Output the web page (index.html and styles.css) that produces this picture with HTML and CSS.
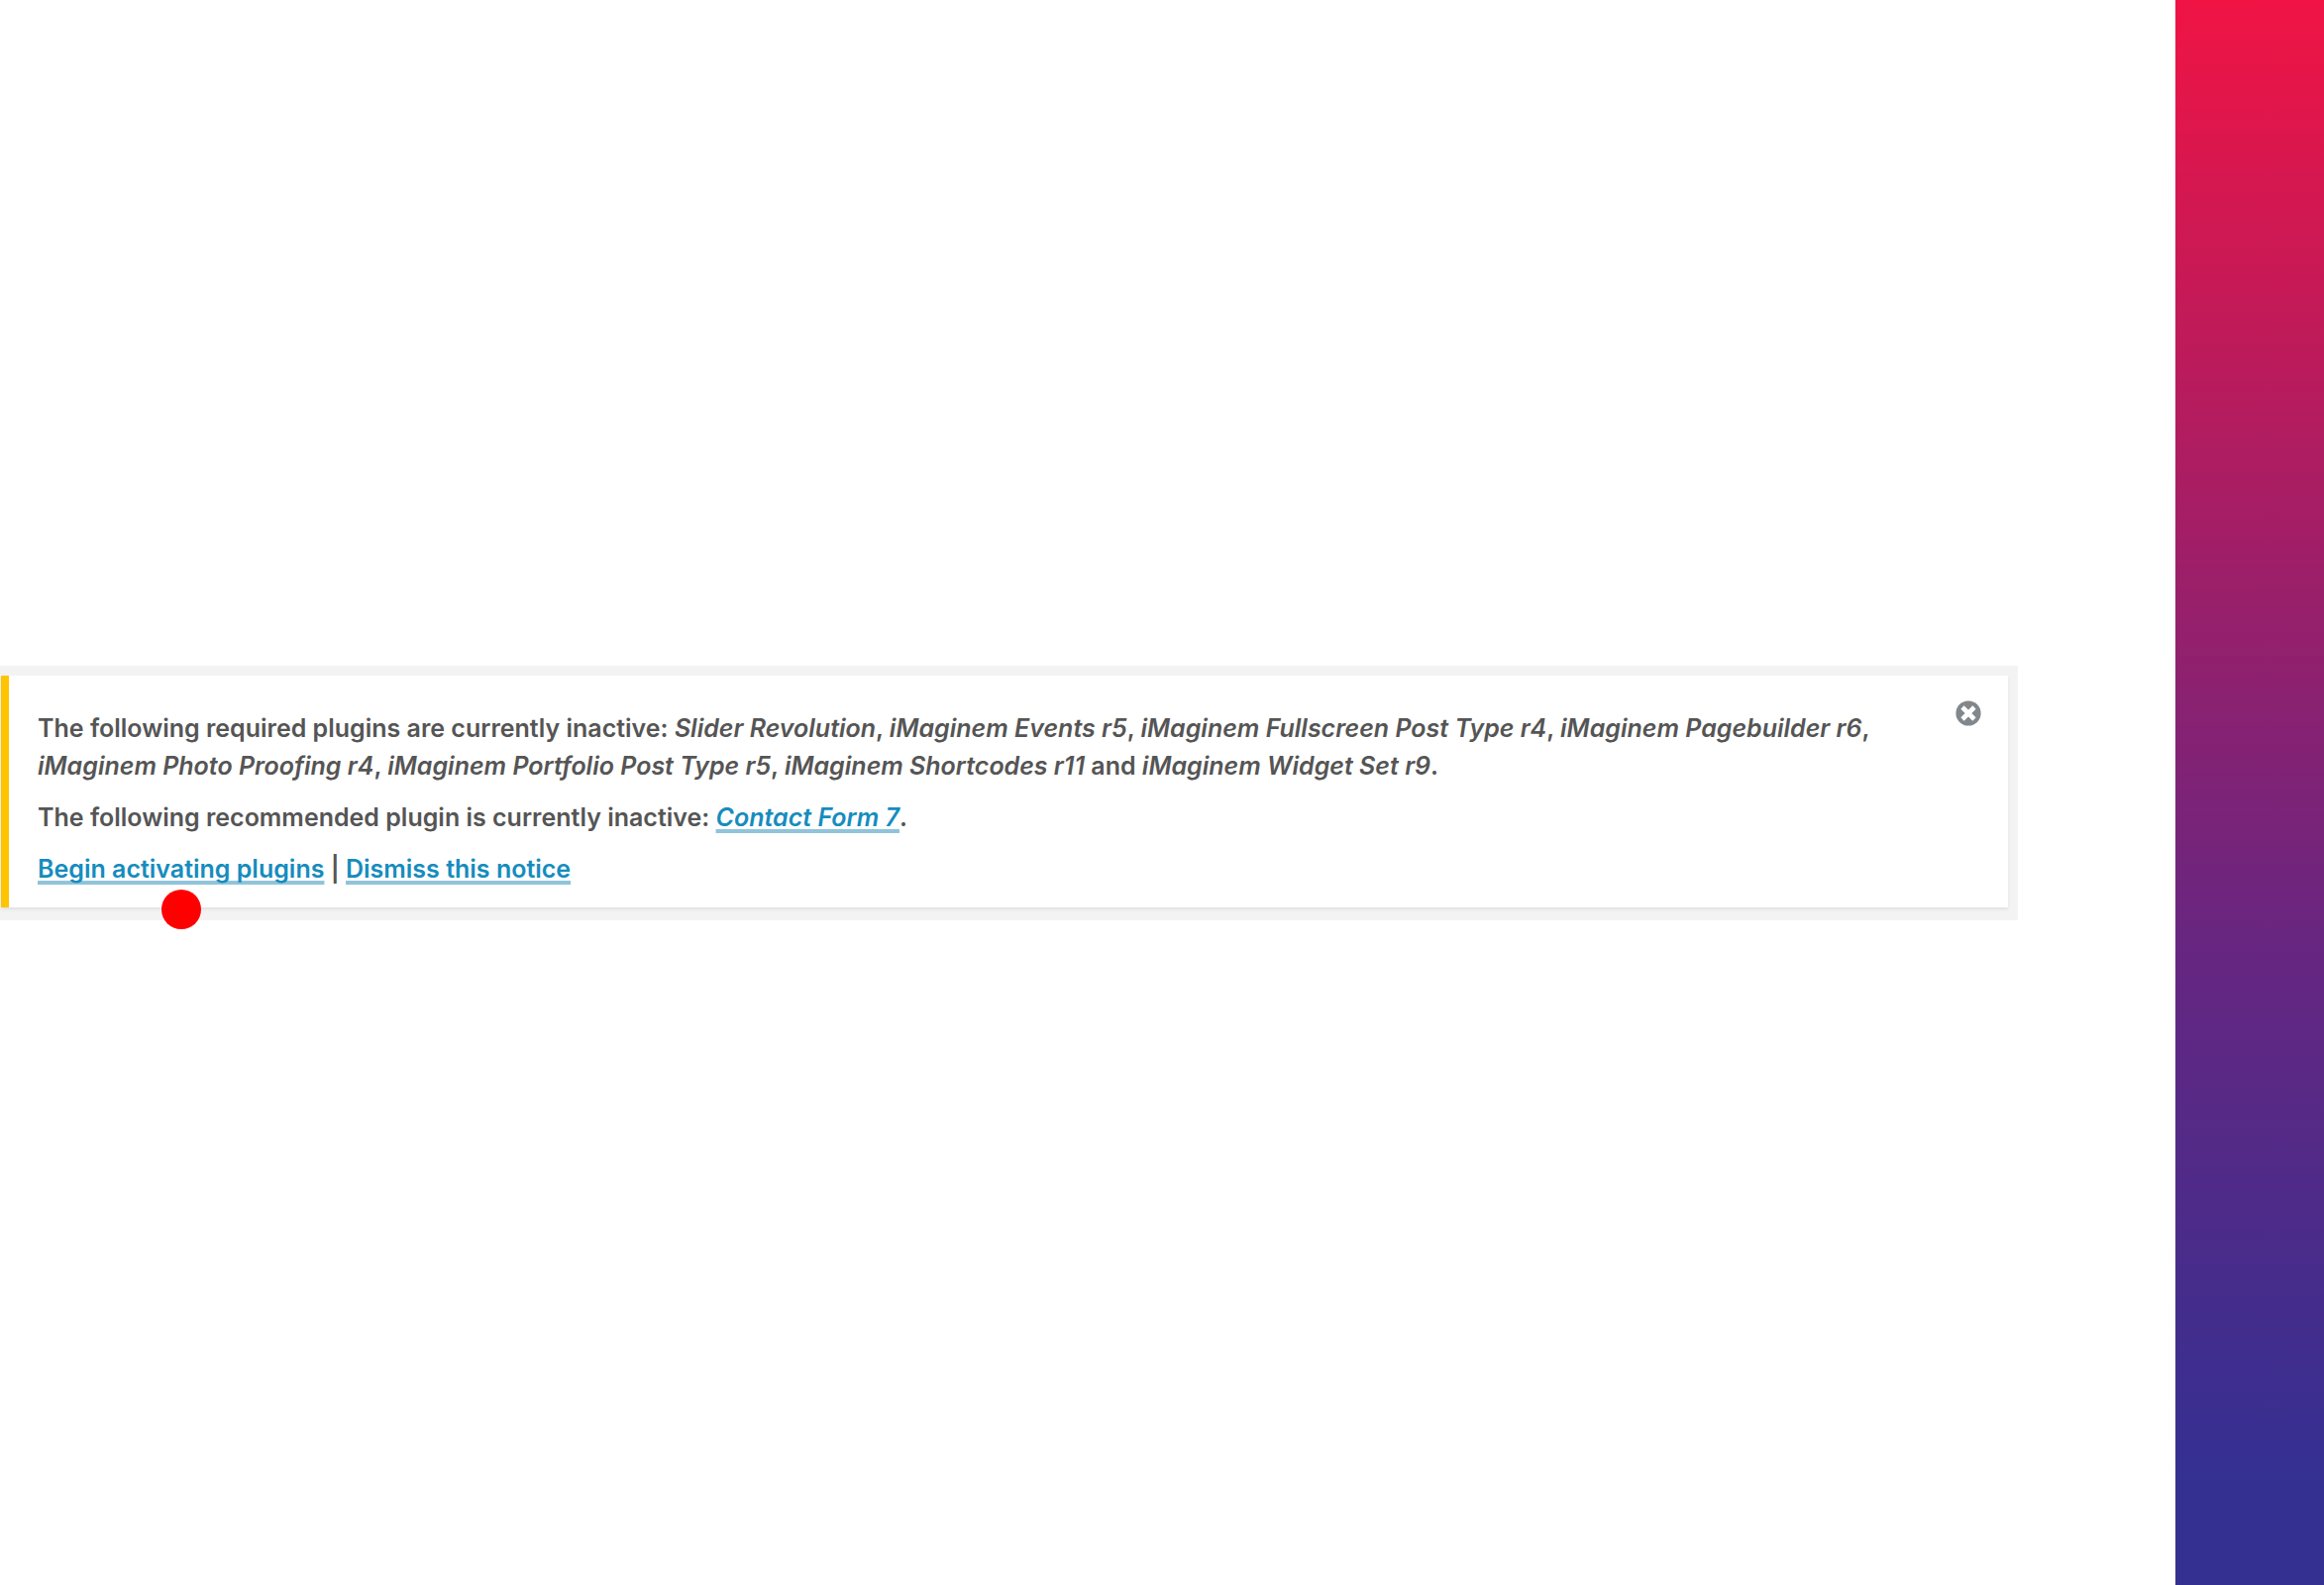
FILE: index.html
```html
<!DOCTYPE html>
<html lang="en">
<head>
<meta charset="utf-8">
<meta name="viewport" content="width=device-width, initial-scale=1">
<title>Plugin notice</title>
<link rel="stylesheet" href="styles.css">
</head>
<body>
<main class="content">
  <section class="panel">
    <div class="notice">
      <div class="message">
        <p>The following required plugins are currently inactive: <em>Slider Revolution</em>, <em>iMaginem Events r5</em>, <em>iMaginem Fullscreen Post Type r4</em>, <em>iMaginem Pagebuilder r6</em>, <br><em>iMaginem Photo Proofing r4</em>, <em>iMaginem Portfolio Post Type r5</em>, <em>iMaginem Shortcodes r11</em> and <em>iMaginem Widget Set r9</em>.</p>
        <p>The following recommended plugin is currently inactive: <a href="#"><em>Contact Form 7</em></a>.</p>
        <p><a href="#">Begin activating plugins</a> | <a href="#">Dismiss this notice</a></p>
      </div>
      <button class="close" type="button" aria-label="Dismiss">
        <svg viewBox="0 0 26 26" width="26" height="26" aria-hidden="true"><circle cx="13" cy="13" r="12.6" fill="#82878c"/><path d="M7 7l12 12M19 7l-12 12" stroke="#fff" stroke-width="4.600"/></svg>
      </button>
    </div>
    <span class="marker"></span>
  </section>
</main>
<aside class="stripe"></aside>
</body>
</html>
```
FILE: styles.css
```css
body {
  margin: 0;
  min-height: 100vh;
  display: flex;
  background: #fff;
  font-family: Inter, "Liberation Sans", sans-serif;
}
.content {
  flex: 1;
  display: flex;
  align-items: center;
  padding-right: 159px;
}
.panel {
  position: relative;
  flex: 1;
  background: #f3f3f3;
  padding: 10px 10px 13px 1px;
}
.notice {
  display: flex;
  justify-content: space-between;
  align-items: flex-start;
  background: #fff;
  border-left: 8px solid #ffc400;
  padding: 25px 27px 20px 29px;
  box-shadow: 0 2px 3px rgba(0, 0, 0, 0.08);
}
.message {
  min-width: 0;
  white-space: nowrap;
  color: #555;
  font-size: 25px;
  font-weight: 600;
  font-optical-sizing: none;
  line-height: 38px;
}
.message p {
  margin: 0 0 14px;
}
.message p:first-child {
  margin-top: 9px;
}
.message p:last-child {
  margin-bottom: 0;
}
.message a {
  color: #168cbe;
  text-decoration: underline 4px #8fc4db;
  text-underline-offset: 3px;
  text-decoration-skip-ink: none;
}
.close {
  display: flex;
  padding: 0;
  border: 0;
  background: none;
}
.marker {
  position: absolute;
  left: 163px;
  bottom: -9px;
  width: 40px;
  height: 40px;
  border-radius: 50%;
  background: #f00;
}
.stripe {
  width: 150px;
  background: linear-gradient(#f01444, #662681 60%, #333092 94%, #333092);
}
```
